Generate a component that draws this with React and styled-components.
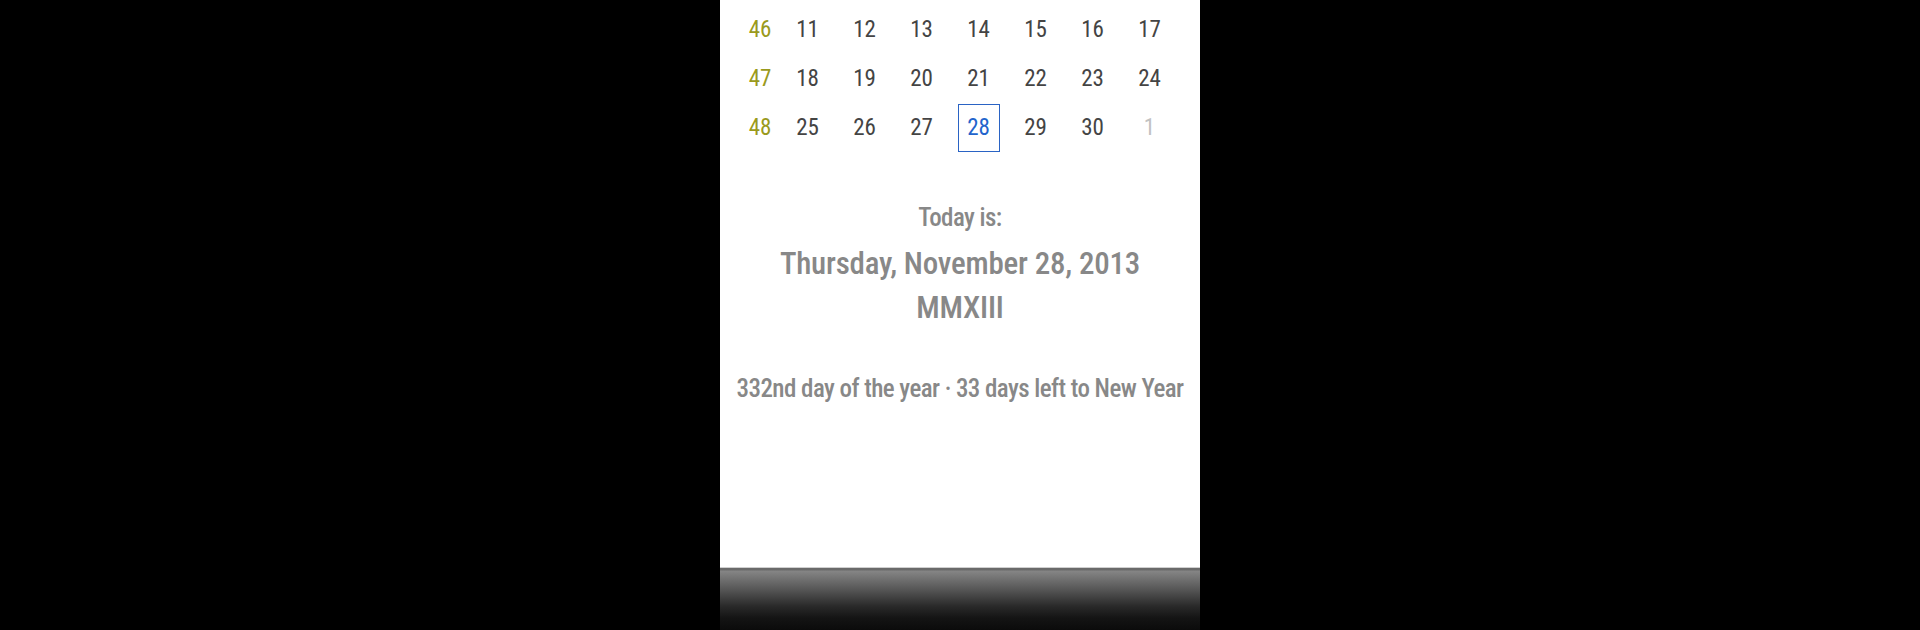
import React from "react";
import styled, { createGlobalStyle } from "styled-components";

const Global = createGlobalStyle`
  html, body { margin: 0; padding: 0; background: #000; }
  body { font-family: Roboto, "Noto Sans", sans-serif; }
`;

const Stage = styled.div`
  width: 1920px;
  height: 630px;
  background: #000;
  display: flex;
  justify-content: center;
  overflow: hidden;
`;

const Phone = styled.div`
  width: 480px;
  height: 630px;
  background: #fff;
  display: flex;
  flex-direction: column;
`;

const Content = styled.div`
  flex: 1;
  display: flex;
  flex-direction: column;
  padding-top: 5.5px;
`;

const Grid = styled.div`
  display: grid;
  grid-template-columns: 38px repeat(7, 57px);
  grid-auto-rows: 49px;
  padding-left: 21px;
  font-family: Roboto, sans-serif;
  font-weight: 370;
  font-stretch: 75%;
  font-size: 23px;
`;

const Cell = styled.div`
  display: flex;
  align-items: center;
  justify-content: center;
  line-height: 48px;
  color: ${(p) => (p.$week ? "#9a9a1c" : p.$muted ? "#c2c2c2" : "#444444")};
`;

const TodayBox = styled.div`
  width: 42px;
  height: 48px;
  box-sizing: border-box;
  border: 1.5px solid #2a63c4;
  display: flex;
  align-items: center;
  justify-content: center;
  color: #2264cc;
  font-weight: 400;
`;

const Info = styled.div`
  display: flex;
  flex-direction: column;
  align-items: center;
  color: #888888;
  font-family: Roboto, sans-serif;
  font-weight: 530;
  font-stretch: 75%;
  text-align: center;
  white-space: nowrap;
`;

const Label = styled.div`
  font-size: 25px;
  line-height: 30px;
  letter-spacing: -0.55px;
  margin-top: ${(p) => p.$mt}px;
`;

const DateLine = styled.div`
  font-size: 31px;
  line-height: 40px;
  letter-spacing: -0.2px;
  margin-top: ${(p) => p.$mt || 0}px;
`;

const Footer = styled.div`
  height: 63px;
  border-top: 1px solid #cfcfcf;
  box-sizing: border-box;
  background: linear-gradient(
    to bottom,
    #6a6a6a 0px,
    #6a6a6a 2px,
    #858585 3px,
    #5a5a5a 20px,
    #2a2a2a 38px,
    #141414 50px,
    #0b0b0b 62px
  );
`;

const weeks = [
  { n: 46, days: [11, 12, 13, 14, 15, 16, 17] },
  { n: 47, days: [18, 19, 20, 21, 22, 23, 24] },
  { n: 48, days: [25, 26, 27, 28, 29, 30, 1] },
];

export default function App() {
  return (
    <>
      <Global />
      <Stage>
        <Phone>
          <Content>
            <Grid>
              {weeks.map((w) => (
                <React.Fragment key={w.n}>
                  <Cell $week>{w.n}</Cell>
                  {w.days.map((d, i) => (
                    <Cell key={i} $muted={w.n === 48 && d === 1}>
                      {d === 28 ? <TodayBox>{d}</TodayBox> : d}
                    </Cell>
                  ))}
                </React.Fragment>
              ))}
            </Grid>
            <Info>
              <Label $mt={50.5}>Today is:</Label>
              <DateLine $mt={11}>Thursday, November 28, 2013</DateLine>
              <DateLine $mt={4}>MMXIII</DateLine>
              <Label $mt={46}>332nd day of the year · 33 days left to New Year</Label>
            </Info>
          </Content>
          <Footer />
        </Phone>
      </Stage>
    </>
  );
}
